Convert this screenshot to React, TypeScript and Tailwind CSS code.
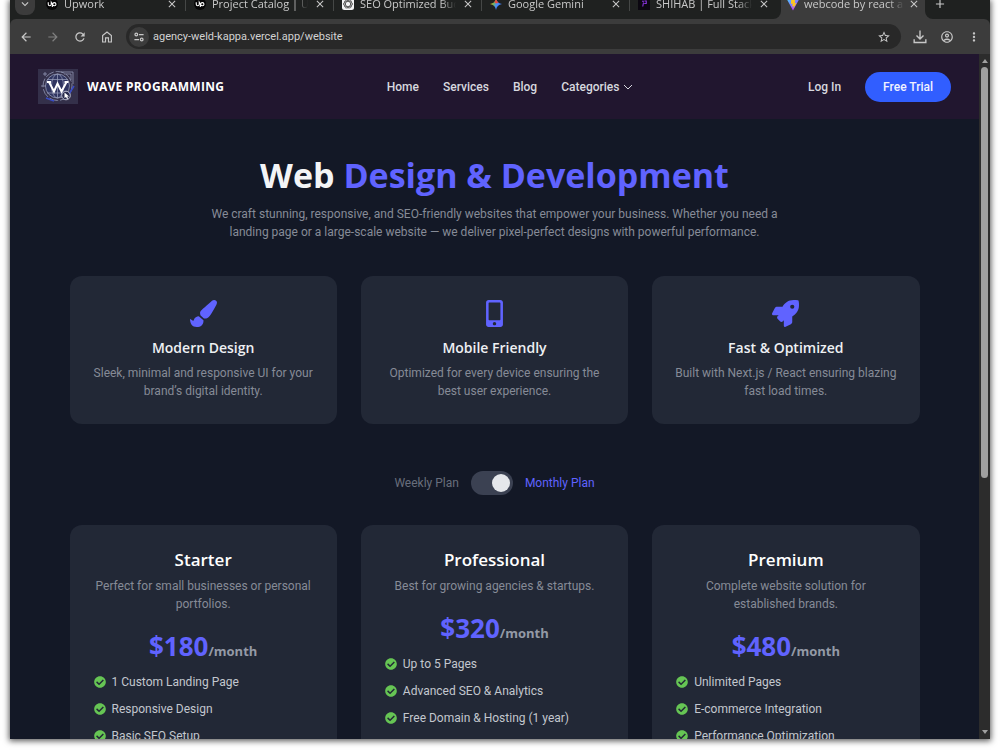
import { useState } from "react";
import type { ReactNode } from "react";
import { FaPaintBrush, FaMobileAlt, FaRocket, FaCheckCircle } from "react-icons/fa";
import {
  MdArrowBack,
  MdArrowForward,
  MdRefresh,
  MdStarBorder,
  MdOutlineAccountCircle,
  MdMoreVert,
  MdClose,
  MdAdd,
  MdKeyboardArrowDown,
} from "react-icons/md";

function UpworkIcon() {
  return (
    <svg viewBox="0 0 24 24" className="size-3 shrink-0" aria-hidden="true">
      <circle cx="12" cy="12" r="12" fill="#050505" />
      <path
        d="M4.500 8.500v4a3 3 0 0 0 6 0v-4l2.500 4.500c1 2 2.200 2.600 3.800 2.600a3.200 3.200 0 1 0-3.300-3.200L12.500 18"
        fill="none"
        stroke="#fff"
        strokeWidth="2.200"
      />
    </svg>
  );
}

function GptIcon() {
  return (
    <svg viewBox="0 0 24 24" className="size-3 shrink-0" aria-hidden="true">
      <rect width="24" height="24" rx="5" fill="#f4f4f4" />
      <g fill="none" stroke="#444" strokeWidth="1.500">
        <ellipse cx="12" cy="12" rx="9" ry="5" />
        <ellipse cx="12" cy="12" rx="9" ry="5" transform="rotate(60 12 12)" />
        <ellipse cx="12" cy="12" rx="9" ry="5" transform="rotate(120 12 12)" />
      </g>
    </svg>
  );
}

function GeminiIcon() {
  return (
    <svg viewBox="0 0 24 24" className="size-3 shrink-0" aria-hidden="true">
      <defs>
        <linearGradient id="gemini" x1="0" y1="0.300" x2="1" y2="0.600">
          <stop offset="0.050" stopColor="#fbbc04" />
          <stop offset="0.350" stopColor="#6bb36b" />
          <stop offset="0.550" stopColor="#4a8cf6" />
          <stop offset="1" stopColor="#3f7df5" />
        </linearGradient>
      </defs>
      <path d="M12 0c1 7 5 11 12 12-7 1-11 5-12 12-1-7-5-11-12-12C7 11 11 7 12 0z" fill="url(#gemini)" />
      <path d="M12 0c1 5 2.500 7.500 5 9.500L12 11 8.500 8.500C10.500 6.500 11.500 4 12 0z" fill="#ea4b3c" />
    </svg>
  );
}

function ShihabIcon() {
  return (
    <svg viewBox="0 0 24 24" className="size-3 shrink-0" aria-hidden="true">
      <rect width="24" height="24" fill="#0b0710" />
      <path d="M8 6.500h4M13 6h3.500v5h-4M11 9l-1.500 8" fill="none" stroke="#8b34e0" strokeWidth="2.200" />
    </svg>
  );
}

function ViteIcon() {
  return (
    <svg viewBox="0 0 24 24" className="size-3.5 shrink-0" aria-hidden="true">
      <defs>
        <linearGradient id="vite" x1="0" y1="0" x2="0.600" y2="1">
          <stop offset="0" stopColor="#41d1ff" />
          <stop offset="1" stopColor="#bd34fe" />
        </linearGradient>
      </defs>
      <path d="M1 3l11 2 11-2-11 20z" fill="url(#vite)" />
      <path d="M16 1L9 2.500 8.500 12l3-.7-1 5 3-1-1 5 5.500-10-3 .6z" fill="#ffc61c" />
    </svg>
  );
}

function HomeIcon() {
  return (
    <svg viewBox="0 0 24 24" className="size-3.5" aria-hidden="true">
      <path d="M4.500 9.500L12 3.500l7.500 6V20.500h-5v-7h-5v7h-5z" fill="none" stroke="currentColor" strokeWidth="2" />
    </svg>
  );
}

function TuneIcon() {
  return (
    <svg viewBox="0 0 24 24" className="size-2.5" aria-hidden="true">
      <g fill="none" stroke="currentColor" strokeWidth="3">
        <circle cx="5.500" cy="6" r="3.200" />
        <path d="M12 6h11M1 18h11" />
        <circle cx="18.500" cy="18" r="3.200" />
      </g>
    </svg>
  );
}

function DownloadIcon() {
  return (
    <svg viewBox="0 0 24 24" className="size-3.5" aria-hidden="true">
      <path d="M12 1v14M6 9.500l6 6 6-6M2 16v5.500h20V16" fill="none" stroke="currentColor" strokeWidth="2.400" />
    </svg>
  );
}

function ChevronIcon() {
  return (
    <svg viewBox="0 0 10 10" className="size-2.5" aria-hidden="true">
      <path d="M1 3l4 4 4-4" fill="none" stroke="currentColor" strokeWidth="1" />
    </svg>
  );
}

function WaveLogo() {
  return (
    <svg viewBox="0 0 40 35" className="h-[35px] w-10 shrink-0" role="img" aria-label="Wave Programming">
      <rect width="40" height="35" fill="#34304a" />
      <circle cx="19.500" cy="17" r="12" fill="#303560" />
      <g fill="none" stroke="#9298b5" strokeWidth="0.800">
        <circle cx="19.500" cy="17" r="14.500" strokeDasharray="9 2" />
        <circle cx="19.500" cy="17" r="12" />
        <ellipse cx="19.500" cy="17" rx="6" ry="12" />
        <path d="M19.500 5v24M9 10.500h21M9 24h21M3 17h5" />
        <path d="M23 3h12v12M26 5h7v6M5 5h4M7 3v4" />
      </g>
      <path d="M8 29l8 3M31 25l5-8" stroke="#394bc4" strokeWidth="1.500" fill="none" />
      <path d="M11 13l5 9.500 3.500-8 4 8 5-9.500M9 13h4M26.500 13h4" fill="none" stroke="#fff" strokeWidth="2" />
      <circle cx="28" cy="26.500" r="4.300" fill="#292c4d" stroke="#c8cbdc" strokeWidth="0.900" />
      <path d="M26.500 23.500v5.500l1.500-1 1 2 1.200-.6-1-1.900h1.900z" fill="#fff" />
    </svg>
  );
}

type Tab = { title: string; icon: ReactNode };

const backgroundTabs: Tab[] = [
  { title: "Upwork", icon: <UpworkIcon /> },
  { title: "Project Catalog | Upwork", icon: <UpworkIcon /> },
  { title: "SEO Optimized Budget", icon: <GptIcon /> },
  { title: "Google Gemini", icon: <GeminiIcon /> },
  { title: "SHIHAB | Full Stack D", icon: <ShihabIcon /> },
];

const activeTab: Tab = { title: "webcode by react an", icon: <ViteIcon /> };

function TabLabel({ title, icon }: Tab) {
  return (
    <>
      {icon}
      <span className="min-w-0 flex-1 overflow-hidden mask-r-from-85% text-[11px] leading-4 whitespace-nowrap">
        {title}
      </span>
      <button aria-label={"Close " + title} className="shrink-0">
        <MdClose className="size-3" />
      </button>
    </>
  );
}

function TabStrip() {
  return (
    <div className="flex h-[19px] shrink-0 items-end overflow-hidden bg-[#3c3c3c] font-['Open_Sans',sans-serif] text-[#c9c9c9]">
      <div className="flex h-[30px] items-center rounded-br-lg bg-[#1f2120] pr-[3px]">
        <button
          aria-label="Search tabs"
          className="mr-[3px] ml-[5px] flex h-[22px] w-5 shrink-0 items-center justify-center rounded-lg bg-[#3c3c3c]"
        >
          <MdKeyboardArrowDown className="size-3.5" />
        </button>
        {backgroundTabs.map((tab, i) => (
          <div key={tab.title} className="relative flex h-full w-[148px] items-center gap-1.5 px-2">
            <TabLabel {...tab} />
            {i < backgroundTabs.length - 1 && <span className="absolute right-0 bottom-2 h-4 w-px bg-[#454746]" />}
          </div>
        ))}
      </div>
      <div className="flex h-[30px] w-36 items-center gap-1 px-[5px]">
        <TabLabel {...activeTab} />
      </div>
      <div className="flex h-[30px] flex-1 items-center rounded-bl-lg bg-[#1f2120] pl-2">
        <button aria-label="New tab">
          <MdAdd className="size-3.5" />
        </button>
      </div>
    </div>
  );
}

function Toolbar() {
  return (
    <div className="shrink-0 bg-[#1f2120]">
      <div className="flex h-[35px] items-center rounded-t-md bg-[#3c3c3c] px-[9px] text-[#c7c7c7]">
        <div className="flex items-center gap-[13px]">
          <button aria-label="Back">
            <MdArrowBack className="size-3.5" />
          </button>
          <button aria-label="Forward" className="text-[#808080]">
            <MdArrowForward className="size-3.5" />
          </button>
          <button aria-label="Reload">
            <MdRefresh className="size-3.5" />
          </button>
          <button aria-label="Home">
            <HomeIcon />
          </button>
        </div>
        <div className="mx-3 flex h-[25px] flex-1 items-center rounded-full bg-[#282828] pr-2.5 pl-[3px]">
          <button aria-label="Site information" className="flex size-5 items-center justify-center rounded-full bg-[#3c3c3c]">
            <TuneIcon />
          </button>
          <input
            aria-label="Address"
            readOnly
            value="agency-weld-kappa.vercel.app/website"
            className="ml-1 h-5 min-w-0 flex-1 bg-transparent text-[11px] text-[#d2d2d2] outline-none"
          />
          <button aria-label="Bookmark this page">
            <MdStarBorder className="size-3.5" />
          </button>
        </div>
        <div className="flex items-center gap-[13px]">
          <button aria-label="Downloads">
            <DownloadIcon />
          </button>
          <button aria-label="Profile">
            <MdOutlineAccountCircle className="size-3.5" />
          </button>
          <button aria-label="Menu">
            <MdMoreVert className="size-3.5" />
          </button>
        </div>
      </div>
    </div>
  );
}

function SiteHeader() {
  return (
    <header className="flex h-[65px] items-center justify-between bg-[#21162f] px-7 text-[12px] font-medium text-[#d7d8df]">
      <a
        href="#"
        className="flex items-center gap-[9px] font-['Open_Sans',sans-serif] text-[12px] font-bold tracking-wide text-white"
      >
        <WaveLogo />
        WAVE PROGRAMMING
      </a>
      <nav className="flex items-center gap-6 pr-3">
        <a href="#">Home</a>
        <a href="#">Services</a>
        <a href="#">Blog</a>
        <button className="flex items-center gap-1">
          Categories
          <ChevronIcon />
        </button>
      </nav>
      <div className="flex items-center gap-6">
        <a href="#">Log In</a>
        <a href="#" className="flex h-[30px] items-center rounded-full bg-[#315eff] px-[18px] text-[#f0f2ff]">
          Free Trial
        </a>
      </div>
    </header>
  );
}

const highlights = [
  { icon: FaPaintBrush, title: "Modern Design", text: "Sleek, minimal and responsive UI for your brand’s digital identity." },
  { icon: FaMobileAlt, title: "Mobile Friendly", text: "Optimized for every device ensuring the best user experience." },
  { icon: FaRocket, title: "Fast & Optimized", text: "Built with Next.js / React ensuring blazing fast load times." },
];

const plans = [
  {
    name: "Starter",
    text: "Perfect for small businesses or personal portfolios.",
    price: 180,
    features: ["1 Custom Landing Page", "Responsive Design", "Basic SEO Setup"],
  },
  {
    name: "Professional",
    text: "Best for growing agencies & startups.",
    price: 320,
    features: ["Up to 5 Pages", "Advanced SEO & Analytics", "Free Domain & Hosting (1 year)"],
  },
  {
    name: "Premium",
    text: "Complete website solution for established brands.",
    price: 480,
    features: ["Unlimited Pages", "E-commerce Integration", "Performance Optimization"],
  },
];

function PlanSwitch() {
  const [monthly, setMonthly] = useState(true);
  return (
    <div className="mt-[47px] flex items-center justify-center gap-3 text-[12px] leading-[18px]">
      <span className={monthly ? "text-[#686e7c]" : "text-[#6063ff]"}>Weekly Plan</span>
      <input
        id="monthly"
        type="checkbox"
        role="switch"
        checked={monthly}
        onChange={(e) => setMonthly(e.target.checked)}
        className="flex h-6 w-[42px] appearance-none items-center rounded-full bg-[#3b4152] px-[3px] before:size-[18px] before:rounded-full before:bg-[#e5e7eb] checked:justify-end"
      />
      <label htmlFor="monthly" className={monthly ? "text-[#6063ff]" : "text-[#686e7c]"}>
        Monthly Plan
      </label>
    </div>
  );
}

function Scrollbar() {
  return (
    <div className="flex w-[11px] shrink-0 flex-col items-center bg-[#2c2c2c]" aria-hidden="true">
      <div className="flex h-[13px] items-center">
        <span className="border-x-3 border-b-4 border-x-transparent border-b-[#a0a0a0]" />
      </div>
      <div className="w-[7px] flex-1">
        <div className="h-5/8 rounded-full bg-[#9f9f9f]" />
      </div>
      <div className="flex h-[14px] items-center">
        <span className="border-x-3 border-t-4 border-x-transparent border-t-[#a0a0a0]" />
      </div>
    </div>
  );
}

export default function App() {
  return (
    <div className="h-screen bg-white px-2.5 pb-[11px] font-['Roboto','Noto_Sans',sans-serif]">
      <div className="flex h-full flex-col overflow-hidden shadow-[0_1px_6px_1px_rgba(0,0,0,0.65)]">
        <TabStrip />
        <Toolbar />
        <div className="flex min-h-0 flex-1">
          <div className="min-w-0 flex-1 overflow-hidden bg-[#131826]">
            <SiteHeader />
            <main className="mx-auto max-w-[850px] pt-8 text-center">
              <h1 className="font-['Open_Sans',sans-serif] text-[34px] leading-[48px] font-bold text-[#f3f4f6]">
                Web <span className="text-[#6063ff]">Design &amp; Development</span>
              </h1>
              <p className="mx-auto mt-1.5 max-w-[600px] text-[12px] leading-[18px] text-[#868b97]">
                We craft stunning, responsive, and SEO-friendly websites that empower your business. Whether you need a
                landing page or a large-scale website — we deliver pixel-perfect designs with powerful performance.
              </p>

              <section className="mt-[35px] grid grid-cols-3 gap-6">
                {highlights.map(({ icon: Icon, title, text }) => (
                  <article key={title} className="rounded-xl bg-[#222836] px-5 py-6">
                    <Icon className="mx-auto size-[27px] text-[#6063ff]" />
                    <h2 className="mt-[9px] font-['Open_Sans',sans-serif] text-[14px] leading-6 font-semibold text-[#eef0f3]">
                      {title}
                    </h2>
                    <p className="mt-1 text-[12px] leading-[18px] text-[#868b97]">{text}</p>
                  </article>
                ))}
              </section>

              <PlanSwitch />

              <section className="mt-[30px] grid grid-cols-3 gap-6">
                {plans.map((plan) => (
                  <article key={plan.name} className="rounded-xl bg-[#222836] p-6">
                    <h2 className="font-['Open_Sans',sans-serif] text-[17px] leading-[22px] font-semibold text-white">
                      {plan.name}
                    </h2>
                    <p className="mt-1.5 text-[12px] leading-[18px] text-[#868b97]">{plan.text}</p>
                    <p className="mt-[15px] font-['Open_Sans',sans-serif] text-[26px] leading-9 font-bold text-[#6063ff]">
                      ${plan.price}
                      <span className="text-[13px] leading-none font-bold text-[#949aa6]">/month</span>
                    </p>
                    <ul className="mt-[9px] flex flex-col gap-[9px] text-left text-[12px] leading-[18px] text-[#c3c7ce]">
                      {plan.features.map((feature) => (
                        <li key={feature} className="flex items-center gap-1.5">
                          <FaCheckCircle className="size-3 shrink-0 text-[#66c554]" />
                          {feature}
                        </li>
                      ))}
                    </ul>
                  </article>
                ))}
              </section>
            </main>
          </div>
          <Scrollbar />
        </div>
      </div>
    </div>
  );
}
